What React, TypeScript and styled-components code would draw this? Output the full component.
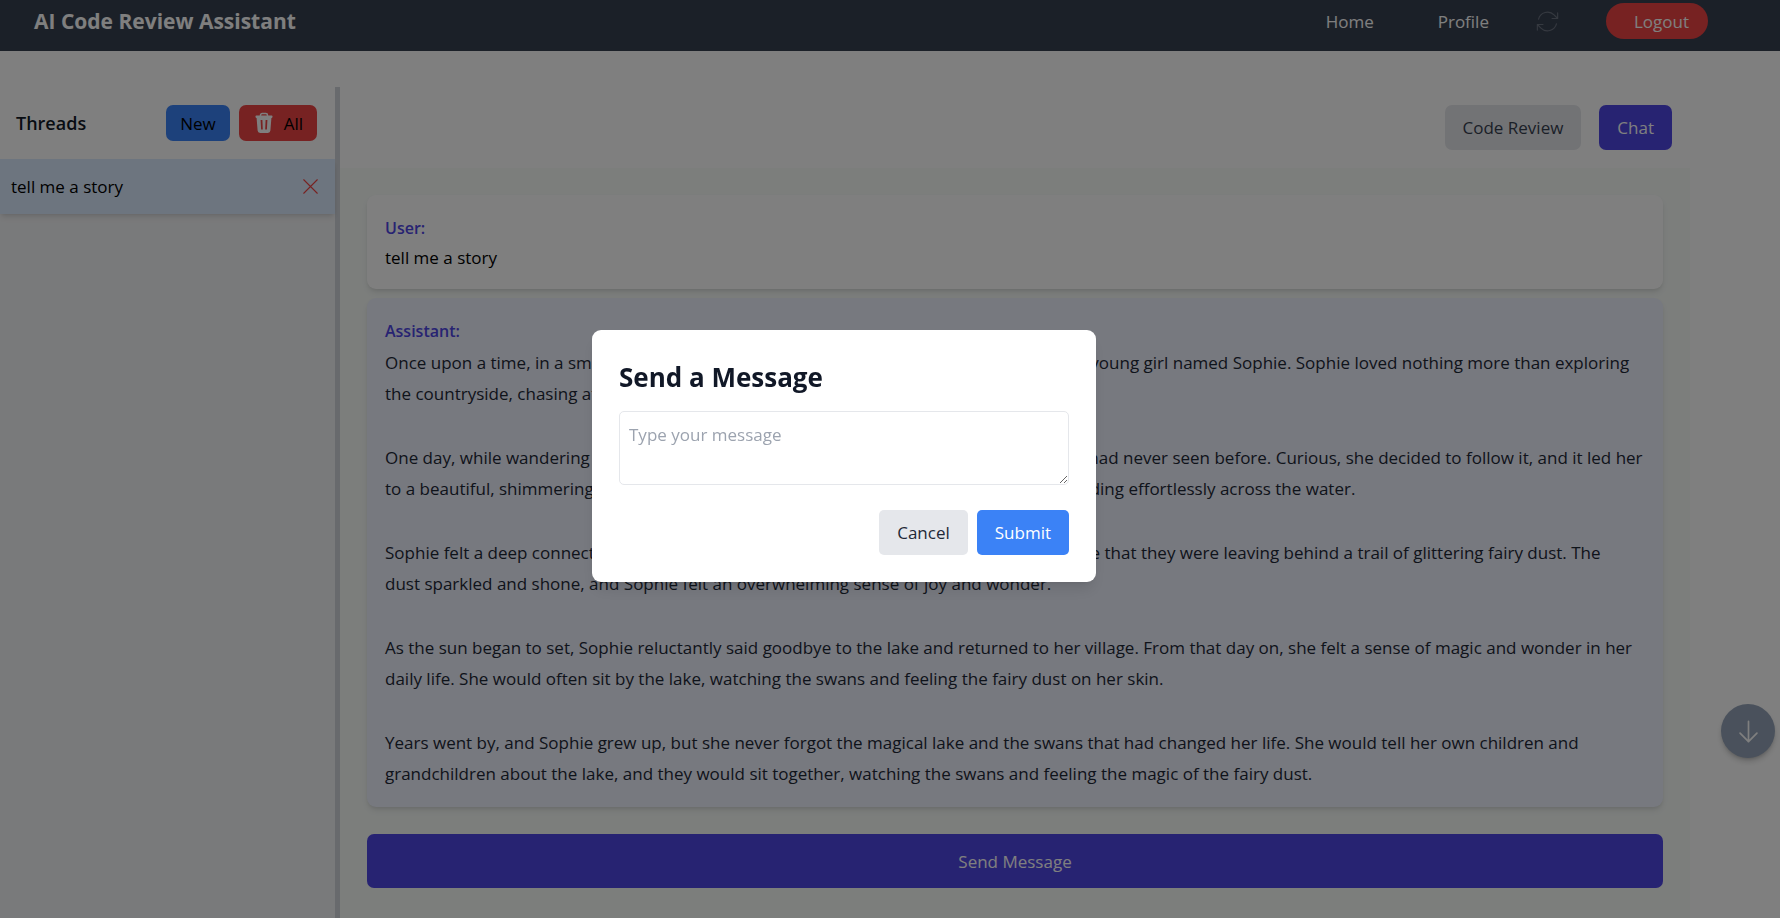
import React, { useState } from "react";
import styled, { createGlobalStyle } from "styled-components";

const GlobalStyle = createGlobalStyle`
  *, *::before, *::after { box-sizing: border-box; }
  body {
    margin: 0;
    background: #ffffff;
    color: #000000;
    font-family: "Open Sans", "Noto Sans", sans-serif;
    font-size: 17px;
    line-height: 27px;
  }
  h1, h2, h3, p { margin: 0; }
  button, textarea { font: inherit; }
`;

const Page = styled.div`
  min-height: 100vh;
  display: flex;
  flex-direction: column;
`;

const Header = styled.header`
  display: flex;
  align-items: center;
  justify-content: space-between;
  padding: 3px 72px 12px 34px;
  background: #374151;
  color: #ffffff;
`;

const Logo = styled.h1`
  font-size: 21px;
  font-weight: 700;
  line-height: 36px;
`;

const Nav = styled.nav`
  display: flex;
  align-items: center;
  gap: 45px;
`;

const NavLinks = styled.div`
  display: flex;
  gap: 64px;
`;

const NavLink = styled.a`
  color: inherit;
  text-decoration: none;
`;

const IconButton = styled.button<{ $color: string }>`
  display: flex;
  padding: 0;
  border: 0;
  background: none;
  color: ${(p) => p.$color};
  cursor: pointer;
`;

const LogoutButton = styled.button`
  height: 36px;
  padding: 0 19px 0 28px;
  border: 0;
  border-radius: 18px;
  background: #ef4444;
  color: #ffffff;
  cursor: pointer;
`;

const Workspace = styled.div`
  flex: 1;
  display: flex;
  margin-top: 36px;
`;

const Sidebar = styled.aside`
  flex: 0 0 340px;
  border-right: 5px solid #d1d5db;
  background: #f3f4f6;
`;

const SidebarHeader = styled.div`
  display: flex;
  align-items: center;
  gap: 9px;
  padding: 18px 18px 18px 16px;
  background: #ffffff;
`;

const SidebarTitle = styled.h2`
  flex: 1;
  color: #111827;
  font-size: 18px;
  font-weight: 600;
`;

const SmallButton = styled.button<{ $bg: string }>`
  display: flex;
  align-items: center;
  gap: 9px;
  height: 36px;
  padding: 0 14px;
  border: 0;
  border-radius: 7px;
  background: ${(p) => p.$bg};
  color: #000000;
  cursor: pointer;
`;

const ThreadItem = styled.div`
  display: flex;
  align-items: center;
  justify-content: space-between;
  padding: 14px 11px;
  background: #dbeafe;
  box-shadow: 0 4px 6px -1px rgba(0, 0, 0, 0.1), 0 2px 4px -2px rgba(0, 0, 0, 0.1);
`;

const Main = styled.main`
  flex: 1;
  min-width: 0;
  display: flex;
  flex-direction: column;
  margin-right: 90px;
`;

const TabBar = styled.div`
  display: flex;
  justify-content: flex-end;
  gap: 18px;
  padding: 18px;
`;

const Button = styled.button<{ $bg: string; $fg: string; $radius?: number }>`
  height: 45px;
  padding: 0 18px;
  border: 0;
  border-radius: ${(p) => p.$radius ?? 7}px;
  background: ${(p) => p.$bg};
  color: ${(p) => p.$fg};
  cursor: pointer;
`;

const ChatPanel = styled.section`
  flex: 1;
  display: flex;
  flex-direction: column;
  padding: 27px 27px 0;
  background: #f8fcf9;
`;

const MessageCard = styled.article<{ $bg: string }>`
  margin-bottom: 9px;
  padding: 18px;
  border-radius: 9px;
  background: ${(p) => p.$bg};
  box-shadow: 0 4px 6px -1px rgba(0, 0, 0, 0.1), 0 2px 4px -2px rgba(0, 0, 0, 0.1);
`;

const Author = styled.h3`
  padding-top: 2px;
  margin-bottom: 2px;
  color: #4f46e5;
  font-size: 16px;
  font-weight: 600;
`;

const Story = styled.div`
  display: flex;
  flex-direction: column;
  gap: 33px;
  color: #1f2937;
  line-height: 31px;
  white-space: pre-line;
`;

const SendButton = styled.button`
  height: 54px;
  margin: 18px 0 27px;
  border: 0;
  border-radius: 7px;
  background: #4f46e5;
  color: #ffffff;
  cursor: pointer;
`;

const ScrollButton = styled.button`
  position: fixed;
  right: 5px;
  bottom: 160px;
  display: flex;
  align-items: center;
  justify-content: center;
  width: 54px;
  height: 54px;
  padding: 0;
  border: 0;
  border-radius: 50%;
  background: #94a3b8;
  color: #ffffff;
  box-shadow: 0 4px 6px -1px rgba(0, 0, 0, 0.2), 0 2px 4px -2px rgba(0, 0, 0, 0.2);
  cursor: pointer;
`;

const Overlay = styled.div`
  position: fixed;
  inset: 0;
  display: flex;
  align-items: center;
  justify-content: center;
  padding: 0 92px 6px 0;
  background: rgba(0, 0, 0, 0.5);
`;

const Dialog = styled.form`
  width: 504px;
  padding: 27px;
  border-radius: 9px;
  background: #ffffff;
  box-shadow: 0 10px 15px -3px rgba(0, 0, 0, 0.1), 0 4px 6px -4px rgba(0, 0, 0, 0.1);
`;

const DialogTitle = styled.h2`
  padding-top: 2px;
  margin-bottom: 16px;
  color: #111827;
  font-size: 26px;
  font-weight: 700;
  line-height: 36px;
`;

const MessageInput = styled.textarea`
  display: block;
  width: 100%;
  height: 74px;
  margin-bottom: 25px;
  padding: 9px;
  border: 1px solid #e5e7eb;
  border-radius: 5px;
  outline: none;
  background: #ffffff;
  color: #111827;

  &::placeholder {
    color: #9ca3af;
  }
`;

const DialogActions = styled.div`
  display: flex;
  justify-content: flex-end;
  gap: 9px;
`;

function LineIcon({ d, weight = 1 }: { d: string; weight?: number }) {
  return (
    <svg
      width="27"
      height="27"
      viewBox="0 0 24 24"
      fill="none"
      stroke="currentColor"
      strokeWidth={weight}
      strokeLinecap="round"
      strokeLinejoin="round"
      aria-hidden="true"
    >
      <path d={d} />
    </svg>
  );
}

const REFRESH =
  "M16.023 9.348h4.992v-.001M2.985 19.644v-4.992m0 0h4.992m-4.993 0 3.181 3.183a8.25 8.25 0 0 0 13.803-3.7M4.031 9.865a8.25 8.25 0 0 1 13.803-3.7l3.181 3.182m0-4.991v4.99";
const CROSS = "M6 18 18 6M6 6l12 12";
const ARROW_DOWN = "M19.5 13.5 12 21m0 0-7.5-7.5M12 21V3";

function TrashIcon() {
  return (
    <svg width="22" height="22" viewBox="0 0 22 22" fill="none" aria-hidden="true">
      <path d="M7.5 4V3.2A1.7 1.7 0 0 1 9.2 1.5h3.6a1.7 1.7 0 0 1 1.7 1.7V4" stroke="#ffffff" strokeWidth="1.5" />
      <path
        fill="#ffffff"
        fillRule="evenodd"
        d="M3.3 3.4h15.4c.5 0 .8.3.8.8v.9c0 .5-.3.8-.8.8h-.3l-1 12.7a2.6 2.6 0 0 1-2.6 2.4H7.2a2.6 2.6 0 0 1-2.6-2.4L3.6 5.9h-.3c-.5 0-.8-.3-.8-.8v-.9c0-.5.3-.8.8-.8zM7.6 8l.5 9.500h1.700L9.400 8zM12.600 8l-.4 9.500h1.700l.5-9.500z"
      />
    </svg>
  );
}

const STORY = [
  "Once upon a time, in a small village nestled in the rolling green hills, there lived a curious young girl named Sophie. Sophie loved nothing more than exploring\nthe countryside, chasing after butterflies, and picking wildflowers.",
  "One day, while wandering into the woods, Sophie stumbled upon a hidden path that she had never seen before. Curious, she decided to follow it, and it led her\nto a beautiful, shimmering lake. Upon the lake, there were many graceful, white swans gliding effortlessly across the water.",
  "Sophie felt a deep connection to the swans, and as she watched them, she began to notice that they were leaving behind a trail of glittering fairy dust. The\ndust sparkled and shone, and Sophie felt an overwhelming sense of joy and wonder.",
  "As the sun began to set, Sophie reluctantly said goodbye to the lake and returned to her village. From that day on, she felt a sense of magic and wonder in her\ndaily life. She would often sit by the lake, watching the swans and feeling the fairy dust on her skin.",
  "Years went by, and Sophie grew up, but she never forgot the magical lake and the swans that had changed her life. She would tell her own children and\ngrandchildren about the lake, and they would sit together, watching the swans and feeling the magic of the fairy dust.",
];

export default function App() {
  const [open, setOpen] = useState(true);
  const [draft, setDraft] = useState("");

  return (
    <Page>
      <GlobalStyle />
      <Header>
        <Logo>AI Code Review Assistant</Logo>
        <Nav>
          <NavLinks>
            <NavLink href="#home">Home</NavLink>
            <NavLink href="#profile">Profile</NavLink>
          </NavLinks>
          <IconButton type="button" $color="#6b7280" aria-label="Refresh">
            <LineIcon d={REFRESH} />
          </IconButton>
          <LogoutButton type="button">Logout</LogoutButton>
        </Nav>
      </Header>

      <Workspace>
        <Sidebar>
          <SidebarHeader>
            <SidebarTitle>Threads</SidebarTitle>
            <SmallButton type="button" $bg="#3b82f6">New</SmallButton>
            <SmallButton type="button" $bg="#ef4444">
              <TrashIcon />
              All
            </SmallButton>
          </SidebarHeader>
          <ThreadItem>
            <span>tell me a story</span>
            <IconButton type="button" $color="#ef4444" aria-label="Delete thread">
              <LineIcon d={CROSS} />
            </IconButton>
          </ThreadItem>
        </Sidebar>

        <Main>
          <TabBar>
            <Button type="button" $bg="#e5e7eb" $fg="#374151">Code Review</Button>
            <Button type="button" $bg="#4f46e5" $fg="#ffffff">Chat</Button>
          </TabBar>
          <ChatPanel>
            <MessageCard $bg="#ffffff">
              <Author>User:</Author>
              <p>tell me a story</p>
            </MessageCard>
            <MessageCard $bg="#eef2ff">
              <Author>Assistant:</Author>
              <Story>
                {STORY.map((text) => (
                  <p key={text}>{text}</p>
                ))}
              </Story>
            </MessageCard>
            <SendButton type="button" onClick={() => setOpen(true)}>Send Message</SendButton>
          </ChatPanel>
        </Main>
      </Workspace>

      <ScrollButton type="button" aria-label="Scroll to bottom">
        <LineIcon d={ARROW_DOWN} weight={1.5} />
      </ScrollButton>

      {open && (
        <Overlay>
          <Dialog
            role="dialog"
            aria-labelledby="dialog-title"
            onSubmit={(e) => {
              e.preventDefault();
              setOpen(false);
            }}
          >
            <DialogTitle id="dialog-title">
              <label htmlFor="message">Send a Message</label>
            </DialogTitle>
            <MessageInput
              id="message"
              placeholder="Type your message"
              value={draft}
              onChange={(e) => setDraft(e.target.value)}
            />
            <DialogActions>
              <Button type="button" $bg="#e5e7eb" $fg="#1f2937" $radius={5} onClick={() => setOpen(false)}>
                Cancel
              </Button>
              <Button type="submit" $bg="#3b82f6" $fg="#ffffff" $radius={5}>Submit</Button>
            </DialogActions>
          </Dialog>
        </Overlay>
      )}
    </Page>
  );
}
